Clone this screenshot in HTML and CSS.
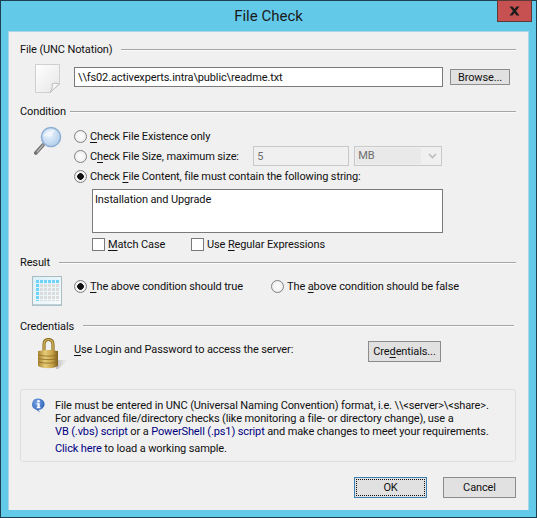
FILE: index.html
```html
<!DOCTYPE html>
<html lang="en">
<head>
<meta charset="utf-8">
<title>File Check</title>
<link rel="stylesheet" href="styles.css">
</head>
<body>
<div class="window">
  <header class="titlebar">
    <span class="title">File Check</span>
    <button class="close" aria-label="Close"><svg width="13" height="10" viewBox="0 0 13 10"><path d="M1.5 0.5 H4.5 L6.5 3 L8.5 0.5 H11.5 L8 5 L11.5 9.5 H8.5 L6.5 7 L4.5 9.5 H1.5 L5 5 Z" fill="#1c1c1c"/></svg></button>
  </header>
  <main class="client">
    <section class="group group-file">
      <div class="head"><span>File (UNC Notation)</span><i class="rule"></i></div>
      <div class="body">
        <div class="iconcol">
          <svg width="27" height="31" viewBox="0 0 27 31">
            <defs><linearGradient id="pg" x1="0" y1="0" x2="1" y2="1"><stop offset="0" stop-color="#ffffff"/><stop offset="1" stop-color="#e6e6e6"/></linearGradient></defs>
            <path d="M1.5 1.5 H25.5 V21 L16 29.5 H1.5 Z" fill="url(#pg)" stroke="#cfcfcf"/>
            <path d="M25.5 21 C22 20 19 20 18 21 C19 23 18 26 16 29.5 Z" fill="#f6f6f6" stroke="#bdbdbd"/>
          </svg>
        </div>
        <input class="field unc" type="text" value="\\fs02.activexperts.intra\public\readme.txt">
        <button class="btn browse">Browse...</button>
      </div>
    </section>

    <section class="group group-cond">
      <div class="head"><span>Condition</span><i class="rule"></i></div>
      <div class="body">
        <div class="iconcol">
          <svg width="28" height="32" viewBox="0 0 28 32">
            <defs><radialGradient id="lens" cx="0.4" cy="0.35" r="0.8"><stop offset="0" stop-color="#eaf3fc"/><stop offset="1" stop-color="#a9c8ea"/></radialGradient></defs>
            <path d="M9 19 L1.8 27" stroke="#6f6f6f" stroke-width="3.6" stroke-linecap="round"/>
            <path d="M9 19 L3 26" stroke="#b8b8b8" stroke-width="1.2" stroke-linecap="round"/>
            <circle cx="17" cy="11" r="9.5" fill="url(#lens)" stroke="#8fb0d4" stroke-width="1.6"/>
            <path d="M9.5 10 C12 6 17 4 21 4 L17 11 Z" fill="#f3f8fd" opacity=".8"/>
          </svg>
        </div>
        <div class="options">
          <label class="opt"><input class="radio" type="radio" name="c"><span><u>C</u>heck File Existence only</span></label>
          <div class="opt size">
            <label class="opt-label"><input class="radio" type="radio" name="c"><span>C<u>h</u>eck File Size, maximum size:</span></label>
            <input class="field num" type="text" value="5" disabled>
            <div class="combo"><span class="combo-val">MB</span><svg width="9" height="6" viewBox="0 0 9 6"><path d="M1 1 L4.5 4.5 L8 1" fill="none" stroke="#bcbcbc" stroke-width="1.6"/></svg></div>
          </div>
          <label class="opt"><input class="radio" type="radio" name="c" checked><span>Check <u>F</u>ile Content, file must contain the following string:</span></label>
          <textarea class="field match" rows="2">Installation and Upgrade</textarea>
          <div class="checks">
            <label class="chk first"><input class="box" type="checkbox"><span><u>M</u>atch Case</span></label>
            <label class="chk"><input class="box" type="checkbox"><span>Use <u>R</u>egular Expressions</span></label>
          </div>
        </div>
      </div>
    </section>

    <section class="group group-result">
      <div class="head"><span>Result</span><i class="rule"></i></div>
      <div class="body">
        <div class="iconcol">
          <svg class="calendar" width="30" height="30" viewBox="0 0 30 30">
            <defs>
              <linearGradient id="calbg" x1="0" y1="0" x2="1" y2="1"><stop offset="0" stop-color="#d9eff8"/><stop offset="1" stop-color="#f8fcfd"/></linearGradient>
              <pattern id="cells" width="4" height="4" patternUnits="userSpaceOnUse" x="4" y="4"><rect width="3" height="3" fill="#dcdcdc"/></pattern>
              <pattern id="cellsb" width="4" height="4" patternUnits="userSpaceOnUse" x="4" y="4"><rect width="3" height="3" fill="#6fd3f7"/></pattern>
            </defs>
            <rect x=".5" y=".5" width="29" height="29" fill="url(#calbg)" stroke="#a9bcc4"/>
            <rect x="4" y="4" width="23" height="21" fill="url(#cells)"/>
            <rect x="4" y="4" width="23" height="3" fill="url(#cellsb)"/>
            <rect x="4" y="4" width="3" height="21" fill="url(#cellsb)"/>
            <rect x="1" y="28" width="28" height="1.4" fill="#bcd0d6"/>
          </svg>
        </div>
        <div class="result-opts">
          <label class="res first"><input class="radio" type="radio" name="r" checked><span><u>T</u>he above condition should true</span></label>
          <label class="res"><input class="radio" type="radio" name="r"><span>The <u>a</u>bove condition should be false</span></label>
        </div>
      </div>
    </section>

    <section class="group group-cred">
      <div class="head short"><span>Credentials</span><i class="rule"></i></div>
      <div class="body">
        <div class="iconcol lockcol">
          <svg width="32" height="33" viewBox="0 0 32 33">
            <defs>
              <linearGradient id="gold" x1="0" y1="0" x2="1" y2="0"><stop offset="0" stop-color="#a8832e"/><stop offset=".35" stop-color="#e6cb78"/><stop offset=".7" stop-color="#c9a549"/><stop offset="1" stop-color="#7f6120"/></linearGradient>
              <linearGradient id="shade" x1="0" y1="0" x2="1" y2="0"><stop offset="0" stop-color="#8f8f8f" stop-opacity=".55"/><stop offset="1" stop-color="#bbbbbb" stop-opacity="0"/></linearGradient>
            </defs>
            <path d="M19 22 H31 L21 31 H19 Z" fill="url(#shade)"/>
            <path d="M7 14 V7 C7 3 8.5 1.5 11.5 1.5 C14.5 1.5 16 3 16 7 V14" fill="none" stroke="#8d6f26" stroke-width="3.2"/>
            <path d="M7 14 V7 C7 3 8.5 1.5 11.5 1.5 C14.5 1.5 16 3 16 7 V14" fill="none" stroke="#d9bc63" stroke-width="1.2"/>
            <path d="M1 13 C7 11.5 16 11.5 21 13 V28 C16 31 6 31 1 28 Z" fill="url(#gold)"/>
            <path d="M1.5 17 C7 18.5 15 18.5 21 17 M1.5 20.5 C7 22 15 22 21 20.5 M1.5 24 C7 25.5 15 25.5 21 24" fill="none" stroke="#8a6b24" stroke-width="1" opacity=".8"/>
          </svg>
        </div>
        <span class="cred-text"><u>U</u>se Login and Password to access the server:</span>
        <button class="btn credbtn">Cre<u>d</u>entials...</button>
      </div>
    </section>

    <aside class="info">
      <svg class="info-icon" width="15" height="15" viewBox="0 0 16 17">
        <defs><radialGradient id="ib" cx=".4" cy=".3" r=".8"><stop offset="0" stop-color="#7aa8e8"/><stop offset="1" stop-color="#1c4fa8"/></radialGradient></defs>
        <path d="M8 .5 A7 6.5 0 1 1 7.8 13.5 L10 16.5 L5 13 A7 6.5 0 0 1 8 .5 Z" fill="url(#ib)"/>
        <rect x="6.6" y="2.5" width="2.8" height="2.4" fill="#fff"/>
        <path d="M5.8 6 H9.4 V10.4 H10.4 V11.6 H5.8 V10.4 H6.8 V7.2 H5.8 Z" fill="#fff"/>
      </svg>
      <div class="info-text">
        <p>File must be entered in UNC (Universal Naming Convention) format, i.e. \\&lt;server&gt;\&lt;share&gt;.</p>
        <p>For advanced file/directory checks (like monitoring a file- or directory change), use a</p>
        <p><a href="#">VB (.vbs) script</a> or a <a href="#">PowerShell (.ps1) script</a> and make changes to meet your requirements.</p>
        <p class="sample"><a href="#">Click here</a> to load a working sample.</p>
      </div>
    </aside>

    <footer class="actions">
      <button class="btn main ok"><span class="focus">OK</span></button>
      <button class="btn main">Cancel</button>
    </footer>
  </main>
</div>
</body>
</html>
```

FILE: styles.css
```css
* { box-sizing: border-box; }
html, body { margin: 0; height: 100%; }
body {
  font-family: "Roboto", "Liberation Sans", sans-serif;
  font-size: 11px;
  letter-spacing: -0.12px;
  color: #111;
  background: #63c9e9;
  overflow: hidden;
}
u { text-decoration-thickness: 1px; text-underline-offset: 2px; }
.window {
  width: 537px;
  height: 518px;
  border: 1px solid #1d4050;
  background: #63c9e9;
  display: flex;
  flex-direction: column;
  padding: 0 7px 7px;
}
.titlebar {
  height: 30px;
  flex: none;
  display: flex;
  justify-content: center;
  align-items: center;
  position: relative;
}
.title { font-size: 15px; letter-spacing: 0; color: #1a1a1a; }
.close {
  position: absolute;
  top: -1px;
  right: -3px;
  width: 35px;
  height: 22px;
  padding: 0;
  border: 1px solid #5b3a38;
  background: #c75050;
  display: flex;
  align-items: center;
  justify-content: center;
}
.client {
  flex: 1;
  background: #f0f0f0;
  border: 1px solid #a9d6e6;
  border-width: 1px 1px 0 1px;
  padding: 9px 12px 0 11px;
  display: flex;
  flex-direction: column;
}
.group { flex: none; }
.group-file { height: 62px; }
.group-cond { height: 151px; }
.group-result { height: 63px; }
.group-cred { height: 72px; }
.head {
  height: 17px;
  display: flex;
  align-items: center;
  gap: 9px;
}
.head span { padding-bottom: 1px; }
.group-file .head { gap: 8px; }
.group-cond .head { gap: 4px; }
.group-cred .head span { padding-bottom: 0; padding-top: 1px; }
.rule {
  flex: 1;
  height: 2px;
  background: linear-gradient(#a6a6a6 0 1px, #fbfbfb 1px 2px);
}
.head.short { padding-right: 2px; }
.body {
  display: flex;
  align-items: flex-start;
  padding-left: 14px;
}
.iconcol { width: 40px; flex: none; line-height: 0; }
.group-file .body { padding-top: 5px; }
.group-cond .body { padding-top: 6px; }
.field {
  font: inherit;
  letter-spacing: inherit;
  color: #111;
  background: #fff;
  border: 1px solid #7a7a7a;
  outline: none;
  padding: 0 3px;
  border-radius: 0;
}
.unc { width: 369px; height: 20px; margin-top: 4px; }
.btn {
  font: inherit;
  letter-spacing: inherit;
  color: #111;
  background: #e1e1e1;
  border: 1px solid #8c8c8c;
  border-radius: 0;
  padding: 0;
}
.browse { width: 60px; height: 16px; margin: 6px 0 0 7px; line-height: 13px; }
.options { width: 368px; }
.opt { height: 20px; display: flex; align-items: center; }
.opt-label { display: flex; align-items: center; width: 180px; white-space: nowrap; }
.radio {
  appearance: none;
  width: 13px;
  height: 13px;
  margin: 0 3px 0 0;
  flex: none;
  border: 1px solid #808080;
  border-radius: 50%;
  background: radial-gradient(circle at 50% 50%, #fff, #e8e8e8);
}
.radio:checked {
  background: radial-gradient(circle, #111 0 3px, #f4f4f4 3.6px, #e4e4e4);
}
.num {
  width: 96px;
  height: 20px;
  background: #f0f0f0;
  border-color: #c8c8c8;
  color: #6d6d6d;
}
.combo {
  width: 88px;
  height: 20px;
  margin-left: 5px;
  border: 1px solid #c8c8c8;
  display: flex;
  align-items: center;
  color: #6d6d6d;
  background: #f0f0f0;
  padding: 1px;
}
.combo-val {
  width: 65px;
  height: 16px;
  background: #e9e9e9;
  padding-left: 2px;
  line-height: 15px;
}
.combo svg { margin-left: 7px; }
.match {
  display: block;
  width: 351px;
  height: 44px;
  margin: 3px 0 0 18px;
  padding: 2px;
  resize: none;
  overflow: hidden;
  line-height: 16px;
}
.checks {
  display: flex;
  height: 20px;
  margin: 1px 0 0 18px;
  align-items: center;
}
.chk { display: flex; align-items: center; }
.chk.first { width: 99px; }
.box {
  appearance: none;
  width: 13px;
  height: 13px;
  margin: 0 3px 0 0;
  border: 1px solid #7a7a7a;
  background: #fff;
}
.calendar { margin-left: -2px; }
.group-result .body { padding-top: 5px; }
.result-opts { display: flex; height: 20px; align-items: center; }
.res { display: flex; align-items: center; }
.res.first { width: 197px; }
.group-cred .body { padding-top: 4px; }
.lockcol { margin-left: 3px; width: 37px; }
.cred-text { margin-top: 2px; width: 294px; line-height: 20px; }
.credbtn { width: 73px; height: 21px; margin-top: 3px; }
.info {
  flex: none;
  height: 73px;
  border: 1px solid #dedede;
  border-radius: 3px;
  display: flex;
  padding: 8px 0 0 10px;
}
.info-icon { flex: none; margin-right: 9px; }
.info-text { padding-top: 1px; }
.info-text p { margin: 0; line-height: 13px; white-space: nowrap; }
.info-text p.sample { margin-top: 3px; line-height: 15px; }
.info-text a { color: #000080; text-decoration: none; }
.actions {
  display: flex;
  justify-content: flex-end;
  gap: 16px;
  margin-top: 15px;
}
.main { width: 73px; height: 21px; }
.ok { border-color: #3c7fb1; padding: 1px; }
.focus {
  display: flex;
  align-items: center;
  justify-content: center;
  height: 100%;
  border: 1px dotted #111;
}
```
